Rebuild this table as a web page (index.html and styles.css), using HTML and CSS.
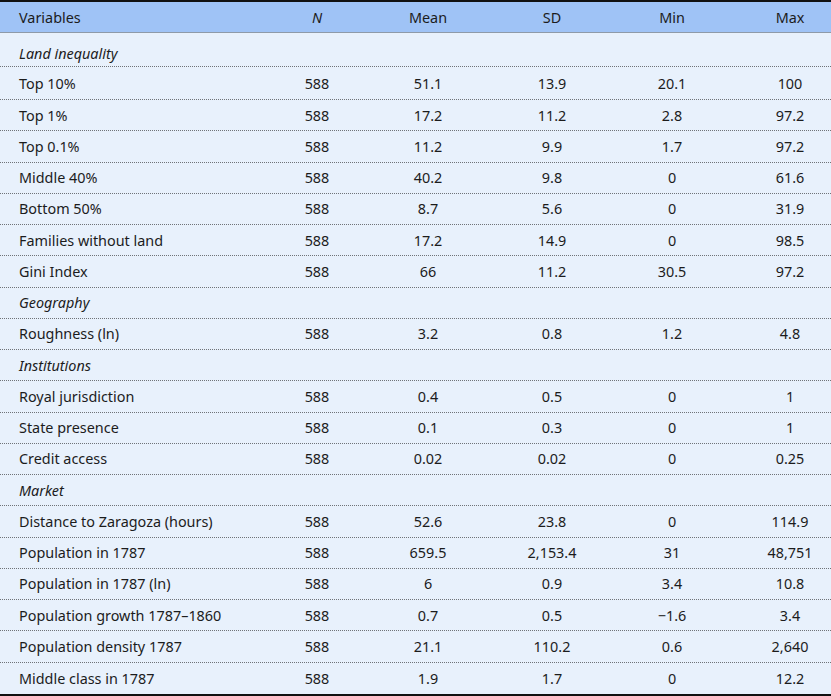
FILE: index.html
```html
<!DOCTYPE html>
<html>
<head>
<meta charset="utf-8">
<link rel="stylesheet" href="styles.css">
</head>
<body>
<div class="table">
  <div class="row head">
    <div class="c v">Variables</div><div class="c"><i>N</i></div><div class="c">Mean</div><div class="c">SD</div><div class="c">Min</div><div class="c mx">Max</div>
  </div>
  <div class="row sec first"><div class="c v"><i>Land inequality</i></div></div>
  <div class="row second"><div class="c v">Top 10%</div><div class="c">588</div><div class="c">51.1</div><div class="c">13.9</div><div class="c">20.1</div><div class="c mx">100</div></div>
  <div class="row"><div class="c v">Top 1%</div><div class="c">588</div><div class="c">17.2</div><div class="c">11.2</div><div class="c">2.8</div><div class="c mx">97.2</div></div>
  <div class="row"><div class="c v">Top 0.1%</div><div class="c">588</div><div class="c">11.2</div><div class="c">9.9</div><div class="c">1.7</div><div class="c mx">97.2</div></div>
  <div class="row"><div class="c v">Middle 40%</div><div class="c">588</div><div class="c">40.2</div><div class="c">9.8</div><div class="c">0</div><div class="c mx">61.6</div></div>
  <div class="row"><div class="c v">Bottom 50%</div><div class="c">588</div><div class="c">8.7</div><div class="c">5.6</div><div class="c">0</div><div class="c mx">31.9</div></div>
  <div class="row"><div class="c v">Families without land</div><div class="c">588</div><div class="c">17.2</div><div class="c">14.9</div><div class="c">0</div><div class="c mx">98.5</div></div>
  <div class="row"><div class="c v">Gini Index</div><div class="c">588</div><div class="c">66</div><div class="c">11.2</div><div class="c">30.5</div><div class="c mx">97.2</div></div>
  <div class="row sec"><div class="c v"><i>Geography</i></div></div>
  <div class="row"><div class="c v">Roughness (ln)</div><div class="c">588</div><div class="c">3.2</div><div class="c">0.8</div><div class="c">1.2</div><div class="c mx">4.8</div></div>
  <div class="row sec"><div class="c v"><i>Institutions</i></div></div>
  <div class="row"><div class="c v">Royal jurisdiction</div><div class="c">588</div><div class="c">0.4</div><div class="c">0.5</div><div class="c">0</div><div class="c mx">1</div></div>
  <div class="row"><div class="c v">State presence</div><div class="c">588</div><div class="c">0.1</div><div class="c">0.3</div><div class="c">0</div><div class="c mx">1</div></div>
  <div class="row"><div class="c v">Credit access</div><div class="c">588</div><div class="c">0.02</div><div class="c">0.02</div><div class="c">0</div><div class="c mx">0.25</div></div>
  <div class="row sec"><div class="c v"><i>Market</i></div></div>
  <div class="row"><div class="c v">Distance to Zaragoza (hours)</div><div class="c">588</div><div class="c">52.6</div><div class="c">23.8</div><div class="c">0</div><div class="c mx">114.9</div></div>
  <div class="row"><div class="c v">Population in 1787</div><div class="c">588</div><div class="c">659.5</div><div class="c">2,153.4</div><div class="c">31</div><div class="c mx">48,751</div></div>
  <div class="row"><div class="c v">Population in 1787 (ln)</div><div class="c">588</div><div class="c">6</div><div class="c">0.9</div><div class="c">3.4</div><div class="c mx">10.8</div></div>
  <div class="row"><div class="c v">Population growth 1787–1860</div><div class="c">588</div><div class="c">0.7</div><div class="c">0.5</div><div class="c">−1.6</div><div class="c mx">3.4</div></div>
  <div class="row"><div class="c v">Population density 1787</div><div class="c">588</div><div class="c">21.1</div><div class="c">110.2</div><div class="c">0.6</div><div class="c mx">2,640</div></div>
  <div class="row last"><div class="c v">Middle class in 1787</div><div class="c">588</div><div class="c">1.9</div><div class="c">1.7</div><div class="c">0</div><div class="c mx">12.2</div></div>
</div>
</body>
</html>
```

FILE: styles.css
```css
html, body {
  margin: 0;
  padding: 0;
  background: #ffffff;
}
body {
  font-family: "Noto Sans", "Open Sans", sans-serif;
  font-size: 14.4px;
  color: #1c1c1c;
}
.table {
  width: 831px;
  border-top: 2px solid #111;
  border-bottom: 2px solid #111;
  background: #e8f1fc;
}
.row {
  display: grid;
  grid-template-columns: 262px 110px 112px 136px 104px 107px;
  height: 30.26px;
  align-items: center;
  border-bottom: 1px dotted #6f7378;
}
.row.head {
  height: 30px;
  background: #9fc3f6;
  border-bottom: 1px solid #8e9aa8;
}
.row.first {
  height: 26px;
  padding-top: 7px;
}
.row.second {
  height: 32px;
}
.row.last {
  height: 31.26px;
  border-bottom: none;
}
.c {
  text-align: center;
  white-space: nowrap;
}
.c.v {
  text-align: left;
  padding-left: 19px;
}
.c.mx {
  padding-left: 25px;
}
```
